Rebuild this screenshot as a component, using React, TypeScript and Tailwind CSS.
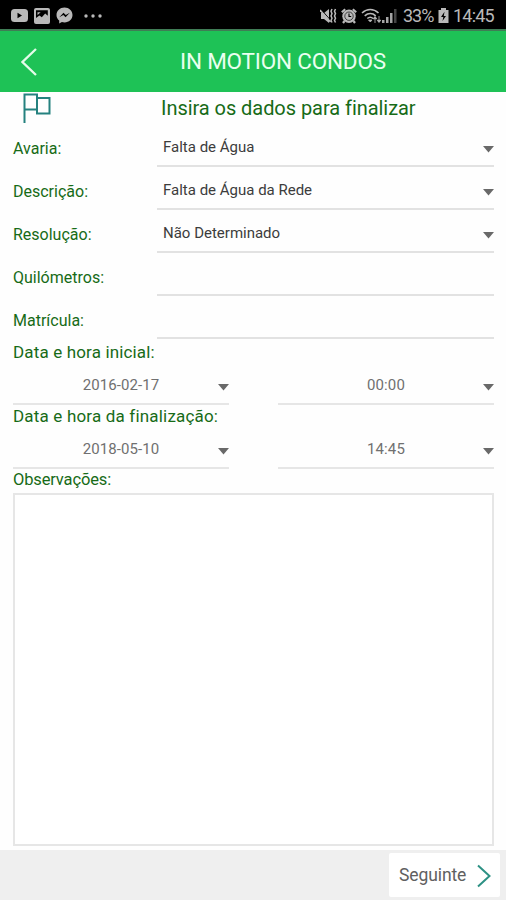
interface FieldProps {
  label: string;
  value?: string;
}

interface DateTimeProps {
  label: string;
  date: string;
  time: string;
  labelClass: string;
}

const fields: FieldProps[] = [
  { label: 'Avaria:', value: 'Falta de Água' },
  { label: 'Descrição:', value: 'Falta de Água da Rede' },
  { label: 'Resolução:', value: 'Não Determinado' },
  { label: 'Quilómetros:' },
  { label: 'Matrícula:' },
];

function Caret() {
  return (
    <svg viewBox="0 0 11 7" className="h-[7px] w-[11px] shrink-0 fill-[#696969]">
      <path d="M0 0h11L5.5 6.5z" />
    </svg>
  );
}

function StatusBar() {
  return (
    <div className="flex h-[31px] shrink-0 items-center border-b-2 border-[#3f7d55] bg-black pt-[2px] pr-[12px] pl-[11px] text-[#b9b9b9]">
      {/* youtube */}
      <svg viewBox="0 0 17 13" className="h-[13px] w-[17px]">
        <rect width="17" height="13" rx="3.5" fill="#b9b9b9" />
        <path d="M6.5 3.8v5.4L11 6.5z" fill="#000" />
      </svg>
      {/* gallery */}
      <svg viewBox="0 0 16 16" className="ml-[6px] h-[16px] w-[16px]">
        <rect width="16" height="16" rx="2" fill="#b9b9b9" />
        <path d="M2 10V2.200h11.800v5.600l-2.600-2.300-3.400 3.700-2.400-1.700z" fill="#000" />
        <path d="M3.500 7V4.200h3.200z" fill="#b9b9b9" />
      </svg>
      {/* messenger */}
      <svg viewBox="0 0 17 17" className="ml-[6px] h-[17px] w-[17px]">
        <path d="M8.500.5C4 .5.5 3.700.5 8c0 2.300 1 4.200 2.700 5.500v3l2.700-1.500c.8.300 1.700.400 2.600.400 4.500 0 8-3.200 8-7.400S13 .5 8.500.5z" fill="#b9b9b9" />
        <path d="M3.300 10.200l4.200-4.400 2.300 2.200 4-2.200-4.200 4.500-2.300-2.300z" fill="#000" />
      </svg>
      {/* more notifications */}
      <svg viewBox="0 0 18 4" className="ml-[11px] h-[4px] w-[18px] fill-[#b9b9b9]">
        <circle cx="2" cy="2" r="1.700" />
        <circle cx="9" cy="2" r="1.700" />
        <circle cx="16" cy="2" r="1.700" />
      </svg>

      <div className="ml-auto flex items-center">
        {/* muted, vibrating */}
        <svg viewBox="0 0 17 16" className="h-[16px] w-[17px]">
          <path d="M1 5h3l5-4v14l-5-4H1z" fill="#b9b9b9" />
          <path d="M1.200 1.500l10.500 12" stroke="#000" strokeWidth="1" />
          <path d="M0 2l10.500 12" stroke="#b9b9b9" strokeWidth="1.500" />
          <path d="M12 1l-1 2.300 1 2.300-1 2.300 1 2.300-1 2.300 1 2M15.500 1l-1 2.300 1 2.300-1 2.300 1 2.300-1 2.300 1 2" fill="none" stroke="#b9b9b9" strokeWidth="1.500" />
        </svg>
        {/* alarm */}
        <svg viewBox="0 0 16 16" className="ml-[4px] h-[16px] w-[16px]">
          <circle cx="8" cy="8.200" r="6.700" fill="#b9b9b9" />
          <path d="M.8 4.200l3.400-3M15.200 4.200l-3.400-3M3.500 13l-1.500 2M12.500 13l1.500 2" stroke="#b9b9b9" strokeWidth="2.200" />
          <circle cx="8" cy="8.200" r="4.200" fill="none" stroke="#222" strokeWidth=".8" />
          <path d="M8 5.500v3h2.200" fill="none" stroke="#000" strokeWidth="1.100" />
        </svg>
        {/* wifi */}
        <svg viewBox="0 0 21 16" className="ml-[4px] h-[16px] w-[21px]">
          <path d="M1 5c5-4.600 11.500-4.600 16.500 0M3.700 7.800c3.400-3 7.800-3 11 0M6.300 10.500c1.800-1.600 4-1.600 5.800 0" fill="none" stroke="#b9b9b9" strokeWidth="1.600" />
          <path d="M7.500 12h3.500L9.300 14zM14 9v6M18 8v6M12.200 10.800L14 8.500l1.800 2.300zM16.200 12.200l1.800 2.300 1.800-2.300z" fill="#b9b9b9" stroke="#b9b9b9" strokeWidth=".8" />
        </svg>
        {/* mobile signal */}
        <svg viewBox="0 0 15 15" className="h-[15px] w-[15px]">
          <path d="M0 12h2.500v3H0zM4 9h2.500v6H4zM8 5h2.500v10H8z" fill="#a5a5a5" />
          <path d="M12 1h2.500v14H12z" fill="#444" />
        </svg>
        <span className="ml-[6px] w-[30px] text-[18px] leading-none tracking-[-1px] whitespace-nowrap">33%</span>
        {/* battery */}
        <svg viewBox="0 0 11 15" className="ml-[5px] h-[15px] w-[11px]">
          <path d="M3 0h5v2h2.500v13H.5V2H3z" fill="#b9b9b9" />
          <path d="M6.500 3.800L3 9h2.300L4.500 13 8 8H5.800z" fill="#000" />
        </svg>
        <span className="ml-[4px] w-[41px] text-[18px] leading-none tracking-[-0.8px] whitespace-nowrap">14:45</span>
      </div>
    </div>
  );
}

function Field({ label, value }: FieldProps) {
  return (
    <div className="flex h-[43px] shrink-0 pr-[12px] pl-[13px]">
      <label className="w-[144px] pt-[13px] text-[16px] leading-[23px] text-[#176b17]">{label}</label>
      <div className="flex flex-1 justify-between border-b-2 border-[#e2e2e2] pl-[6px]">
        <span className="pt-[13px] text-[15px] leading-[21px] text-[#3c3c3c]">{value}</span>
        {value && (
          <span className="pt-[22px]">
            <Caret />
          </span>
        )}
      </div>
    </div>
  );
}

function Picker({ value }: { value: string }) {
  return (
    <div className="flex h-[40px] w-[216px] items-center border-b-2 border-[#e6e6e6] pt-[2px]">
      <span className="flex-1 pl-[11px] text-center text-[15px] leading-[20px] tracking-[0.1px] text-[#707070]">{value}</span>
      <span className="pt-[4px]">
        <Caret />
      </span>
    </div>
  );
}

function DateTime({ label, date, time, labelClass }: DateTimeProps) {
  return (
    <div className="shrink-0 pr-[12px] pl-[13px]">
      <p className={`text-[17px] text-[#176b17] ${labelClass}`}>{label}</p>
      <div className="flex justify-between">
        <Picker value={date} />
        <Picker value={time} />
      </div>
    </div>
  );
}

export default function App() {
  return (
    <div className="flex h-[900px] w-[506px] flex-col overflow-hidden bg-[#fefefe] font-['Roboto','Liberation_Sans',sans-serif]">
      <StatusBar />

      {/* header */}
      <header className="flex h-[61px] shrink-0 items-center bg-[#1ec256] pl-[21px]">
        <svg viewBox="0 0 16 28" className="h-[28px] w-[16px]">
          <path d="M15 1L1.500 14 15 27" fill="none" stroke="#e4fbe9" strokeWidth="2.300" />
        </svg>
        <h1 className="ml-[143px] text-[22.500px] leading-none tracking-[-0.200px] whitespace-nowrap text-[#eafff0]">IN MOTION CONDOS</h1>
      </header>

      <div className="flex h-[32px] shrink-0 pl-[23px]">
        <svg viewBox="0 0 28 31" className="mt-[1px] h-[31px] w-[28px]">
          <path d="M1.500 30V1.500H14v15H1.500M14 5h12.500v15.500H14v-4" fill="none" stroke="#25817f" strokeWidth="2" />
        </svg>
        <h2 className="ml-[110px] pt-[3px] text-[20px] leading-[26px] tracking-[-0.050px] whitespace-nowrap text-[#176b17]">Insira os dados para finalizar</h2>
      </div>

      {fields.map((field) => (
        <Field key={field.label} {...field} />
      ))}

      <DateTime label="Data e hora inicial:" date="2016-02-17" time="00:00" labelClass="h-[26px] leading-[26px] tracking-[0.150px]" />
      <DateTime label="Data e hora da finalização:" date="2018-05-10" time="14:45" labelClass="h-[24px] leading-[23px] tracking-[0.180px]" />

      <p className="h-[24px] shrink-0 pl-[13px] text-[16.500px] leading-[21px] tracking-[-0.150px] text-[#176b17]">Observações:</p>
      <textarea className="mr-[12px] ml-[13px] h-[353px] shrink-0 resize-none border-2 border-[#e6e6e6] bg-white outline-none" />

      <footer className="mt-auto flex h-[50px] shrink-0 items-center justify-end bg-[#efefef] pr-[6px]">
        <button className="flex h-[44px] w-[111px] items-center rounded-[2px] bg-white pl-[10px]">
          <span className="w-[68px] pt-[2px] text-left text-[17.500px] leading-none tracking-[-0.100px] text-[#606060]">Seguinte</span>
          <svg viewBox="0 0 14 24" className="mt-[1px] ml-[10px] h-[24px] w-[14px]">
            <path d="M1 1.500L12.500 12 1 22.500" fill="none" stroke="#2d9184" strokeWidth="2" />
          </svg>
        </button>
      </footer>
    </div>
  );
}
